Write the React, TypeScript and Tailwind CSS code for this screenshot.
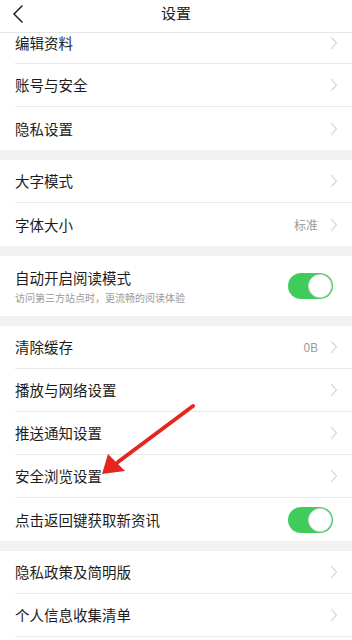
import React from "react";

const Chevron = () => (
  <svg width="8" height="14" viewBox="0 0 8 14" className="shrink-0">
    <path d="M1.5 1.5 L6.5 7 L1.5 12.5" fill="none" stroke="#cccccc" strokeWidth="1.1" strokeLinecap="round" strokeLinejoin="round" />
  </svg>
);

const Toggle = () => (
  <div className="w-[45px] h-[26px] rounded-full bg-[#3fcc5c] relative shrink-0">
    <div className="absolute right-[1px] top-[1px] w-[24px] h-[24px] rounded-full bg-white border border-[#d8d8d8]" />
  </div>
);

type RowProps = { label: string; value?: string; toggle?: boolean; last?: boolean; sub?: string };

const Row = ({ label, value, toggle, last, sub }: RowProps) => (
  <div className={`ml-[15px] pr-[14px] flex items-center ${sub ? "h-[60px]" : "h-[43px]"} ${last ? "" : "border-b border-[#e8e8e8]"}`}>
    <div className="flex-1 flex flex-col">
      <span className="text-[14.5px] text-[#1c1c1c] leading-[20px]">{label}</span>
      {sub && <span className="text-[10px] text-[#9a9a9a] leading-[14px] mt-[3px]">{sub}</span>}
    </div>
    {value && <span className="text-[12px] text-[#9a9a9a] mr-[12px]">{value}</span>}
    {toggle ? <div className="mr-[5px]"><Toggle /></div> : <Chevron />}
  </div>
);

const Band = () => <div className="h-[10px] bg-[#f1f1f1]" />;

export default function App() {
  return (
    <div className="w-[352px] h-[640px] overflow-hidden bg-white relative" style={{ fontFamily: '"Noto Sans CJK SC", "Noto Sans", sans-serif' }}>
      <div className="h-[33px] border-b border-[#e6e6e6] flex items-center relative">
        <svg width="12" height="20" viewBox="0 0 12 20" className="absolute left-[12px] top-[4px]">
          <path d="M10 2 L2 10 L10 18" fill="none" stroke="#222" strokeWidth="1.6" strokeLinecap="round" strokeLinejoin="round" />
        </svg>
        <div className="flex-1 text-center text-[15px] text-[#1c1c1c] -mt-[5px]">设置</div>
      </div>
      <div className="ml-[15px] pr-[14px] h-[31px] flex items-start border-b border-[#e8e8e8]">
        <span className="flex-1 text-[14.5px] text-[#1c1c1c] leading-[20px]">编辑资料</span>
        <div className="mt-[3px]"><Chevron /></div>
      </div>
      <Row label="账号与安全" />
      <Row label="隐私设置" last />
      <Band />
      <Row label="大字模式" />
      <Row label="字体大小" value="标准" last />
      <Band />
      <Row label="自动开启阅读模式" sub="访问第三方站点时，更流畅的阅读体验" toggle last />
      <Band />
      <Row label="清除缓存" value="0B" />
      <Row label="播放与网络设置" />
      <Row label="推送通知设置" />
      <Row label="安全浏览设置" />
      <Row label="点击返回键获取新资讯" toggle last />
      <Band />
      <Row label="隐私政策及简明版" />
      <Row label="个人信息收集清单" />
      <div className="h-[43px]" />
      <svg width="352" height="640" className="absolute left-0 top-0 pointer-events-none">
        <line x1="193" y1="406" x2="118" y2="462" stroke="#e5261f" strokeWidth="4" strokeLinecap="round" />
        <polygon points="102,474 108,454 125,471" fill="#e5261f" />
      </svg>
    </div>
  );
}
